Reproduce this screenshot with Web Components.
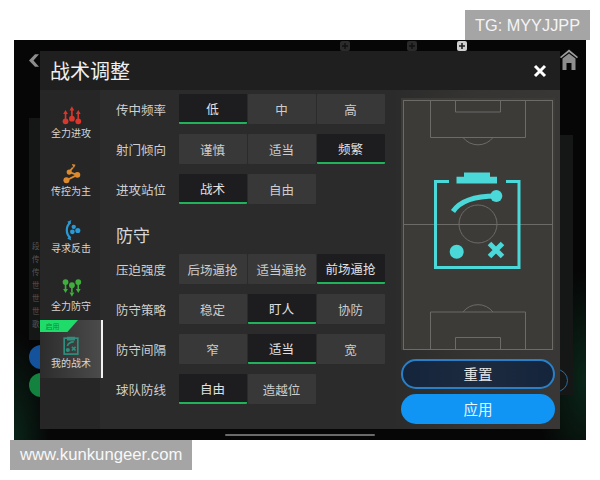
<!DOCTYPE html>
<html lang="zh">
<head>
<meta charset="utf-8">
<style>
html,body{margin:0;padding:0;background:#fff}
body{width:600px;height:480px;overflow:hidden;font-family:"Noto Sans CJK SC","Noto Sans",sans-serif}
</style>
</head>
<body>
<game-page>
  <water-mark slot="top">TG: MYYJJPP</water-mark>
  <tactic-modal title-text="战术调整">
    <side-item slot="side" icon="attack">全力进攻</side-item>
    <side-item slot="side" icon="pass">传控为主</side-item>
    <side-item slot="side" icon="counter">寻求反击</side-item>
    <side-item slot="side" icon="defend">全力防守</side-item>
    <side-item slot="side" icon="mine" active>我的战术</side-item>

    <opt-row slot="form" label="传中频率" options="低,中,高" selected="0"></opt-row>
    <opt-row slot="form" label="射门倾向" options="谨慎,适当,频繁" selected="2"></opt-row>
    <opt-row slot="form" label="进攻站位" options="战术,自由" selected="0"></opt-row>
    <section-title slot="form">防守</section-title>
    <opt-row slot="form" label="压迫强度" options="后场逼抢,适当逼抢,前场逼抢" selected="2"></opt-row>
    <opt-row slot="form" label="防守策略" options="稳定,盯人,协防" selected="1"></opt-row>
    <opt-row slot="form" label="防守间隔" options="窄,适当,宽" selected="1"></opt-row>
    <opt-row slot="form" label="球队防线" options="自由,造越位" selected="0"></opt-row>

    <pitch-board slot="right"></pitch-board>
    <action-btn slot="right" kind="ghost">重置</action-btn>
    <action-btn slot="right" kind="solid">应用</action-btn>
  </tactic-modal>
  <water-mark slot="bottom" kind="url">www.kunkungeer.com</water-mark>
</game-page>

<script>
function shadow(el, html){ el.attachShadow({mode:'open'}).innerHTML = html; }

customElements.define('game-page', class extends HTMLElement{
  constructor(){super();shadow(this,`<style>
    :host{display:flex;flex-direction:column;width:600px;height:480px}
    .top{height:40px;display:flex;justify-content:flex-end;align-items:flex-end;padding-right:10px;box-sizing:border-box}
    .stage{position:relative;height:400px;margin:0 14px;box-sizing:border-box;padding:11px 26px;overflow:hidden;
      background:
        radial-gradient(50px 110px at 100% 85%,#0a2619 0,rgba(10,38,25,0) 100%),
        radial-gradient(36px 110px at 0 100%,#0a2519 0,rgba(10,37,25,0) 100%),
        #060606}
    .bottom{height:40px;display:flex;align-items:flex-start;padding-left:10px}
    .back{position:absolute;left:14px;top:13px}
    .home{position:absolute;left:546px;top:9px}
    .plus{position:absolute;top:1px}
    .leftlist{position:absolute;left:15px;top:78px;width:11px;height:222px;background:#151616;color:#565656;font-size:7.500px;line-height:13px;padding:121px 0 0 3px;box-sizing:border-box;overflow:hidden}
    .c1,.c2{position:absolute;left:15px;width:24px;height:24px;border-radius:50%}
    .c1{top:305px;background:#14539b}
    .c2{top:333px;background:#13823f}
    .ring{position:absolute;left:531px;top:329px;width:21px;height:21px;border:1.500px solid #1f6fb3;border-radius:50%}
    .rside{position:absolute;left:546px;top:95px;width:13px;height:260px;background:#151616}
    .bar{position:absolute;left:211px;top:394px;width:150px;height:2px;background:#6a6a6a;border-radius:1px}
  </style>
  <div class="top"><slot name="top"></slot></div>
  <div class="stage">
    <div class="rside"></div>
    <div class="leftlist">段<br>传<br>传<br>世<br>世<br>世<br>歌</div>
    <div class="c1"></div><div class="c2"></div><div class="ring"></div>
    <svg class="back" width="12" height="15" viewBox="0 0 12 15"><path d="M11 1.200 5.500 7.500l5.500 6.300H7L1 7.500l6-6.300z" fill="#8c8c8c"/></svg>
    <svg class="plus" style="left:326px" width="10" height="10" viewBox="0 0 10 10"><rect width="10" height="10" rx="2" fill="#2b2b2b"/><path d="M5 2v6M2 5h6" stroke="#111" stroke-width="1.400"/></svg>
    <svg class="plus" style="left:393px" width="10" height="10" viewBox="0 0 10 10"><rect width="10" height="10" rx="2" fill="#2b2b2b"/><path d="M5 2v6M2 5h6" stroke="#111" stroke-width="1.400"/></svg>
    <svg class="plus" style="left:443px" width="10" height="10" viewBox="0 0 10 10"><rect width="10" height="10" rx="2" fill="#cfcfcf"/><path d="M5 2v6M2 5h6" stroke="#222" stroke-width="1.600"/></svg>
    <svg class="home" width="18" height="21" viewBox="0 0 18 21"><path d="M9 0.500 18 8l-1 1.300L9 3 1 9.300 0 8z" fill="#9a9a9a"/><path d="M2.500 9.500 9 4.500l6.500 5V21h-4v-7h-5v7h-4z" fill="#8d8d8d"/></svg>
    <div class="bar"></div>
    <slot></slot>
  </div>
  <div class="bottom"><slot name="bottom"></slot></div>`);}
});

customElements.define('water-mark', class extends HTMLElement{
  constructor(){super();shadow(this,`<style>
    :host{display:block;background:#a5a5a5;color:#f4f4f4;font:16.300px/30px "Liberation Sans",sans-serif;padding:0 10px;height:30px;box-sizing:border-box;white-space:nowrap}
    :host([kind=url]){font-size:16.700px;color:#f8f8f8}
  </style><slot></slot>`);}
});

customElements.define('tactic-modal', class extends HTMLElement{
  constructor(){super();shadow(this,`<style>
    :host{display:flex;flex-direction:column;position:relative;width:520px;height:378px;background:#2b2b2b}
    header{height:39px;flex:none;background:#1f1f1f;display:flex;align-items:center;justify-content:space-between;padding:0 13px 0 10px;color:#efefef;font-size:20px}
    .body{flex:1;display:flex;min-height:0}
    .side{width:60px;flex:none;background:#262626;display:flex;flex-direction:column}
    .form{width:292px;flex:none;box-sizing:border-box;padding:4px 0 0 16px;display:flex;flex-direction:column;gap:10px}
    .right{flex:1;background:linear-gradient(90deg,#2b2b2b,#353432 50%,#383735);display:flex;flex-direction:column;align-items:flex-start;padding:8px 0 0 9px;box-sizing:border-box}
  </style>
  <header><span id="t"></span>
    <svg width="14" height="14" viewBox="0 0 14 14"><path d="M2 2l10 10M12 2 2 12" stroke="#fff" stroke-width="3"/></svg>
  </header>
  <div class="body">
    <div class="side"><slot name="side"></slot></div>
    <div class="form"><slot name="form"></slot></div>
    <div class="right"><slot name="right"></slot></div>
  </div>`);
  this.shadowRoot.getElementById('t').textContent=this.getAttribute('title-text');}
});

const ICONS={
attack:`<g fill="#d9372b" stroke="#d9372b"><path d="M5 9v8M12 5v9M19 9v8" stroke-width="1.800" fill="none"/>
  <path d="M5 5.500 2.400 10h5.200zM12 1.500 9.400 6h5.200zM19 5.500 16.400 10h5.200z" stroke="none"/>
  <circle cx="5" cy="18" r="3.200" stroke="none"/><circle cx="12" cy="15" r="3.200" stroke="none"/><circle cx="19" cy="18" r="3.200" stroke="none"/></g>`,
pass:`<g fill="#dd8a2e" stroke="#dd8a2e"><path d="M13 5 9 10l9 3-12 6" stroke-width="2" fill="none"/>
  <path d="M12 1l4 1-2 4z" stroke="none"/><circle cx="9" cy="10" r="2.800" stroke="none"/><circle cx="18" cy="13" r="3.200" stroke="none"/><circle cx="6" cy="19" r="3.300" stroke="none"/></g>`,
counter:`<g fill="#2a9ad6"><path d="M10.500 2.500C5 6.500 5 15 10.500 20" stroke="#2a9ad6" stroke-width="2.400" fill="none"/>
  <path d="M11.500 0l-2 5-2.500-3zM11.500 22.500l-2-5-2.500 3z"/><circle cx="14" cy="7.500" r="2.400"/><circle cx="12.500" cy="13" r="2.600"/><circle cx="18.500" cy="11.500" r="2.800"/></g>`,
defend:`<g fill="#3fae3c" stroke="#3fae3c"><path d="M5 6v7M12 9v7M19 6v7" stroke-width="1.800" fill="none"/>
  <circle cx="5" cy="4.500" r="3.200" stroke="none"/><circle cx="12" cy="8" r="3.200" stroke="none"/><circle cx="19" cy="4.500" r="3.200" stroke="none"/>
  <path d="M5 16.500 2.400 12h5.200zM12 20.500 9.400 16h5.200zM19 16.500 16.400 12h5.200z" stroke="none"/></g>`,
mine:`<g fill="none" stroke="#2f8f7e" stroke-width="1.800"><rect x="3.500" y="3.500" width="15" height="17.500"/>
  <path d="M7.500 2.800h7v2.400h-7z" fill="#2f8f7e"/><path d="M7 12c1-3 4-4.500 7-4.500"/><path d="M12 17l4-4M16 17l-4-4"/><circle cx="7.500" cy="16.500" r="1.400" fill="#2f8f7e"/></g>`
};

customElements.define('side-item', class extends HTMLElement{
  constructor(){super();const a=this.hasAttribute('active');shadow(this,`<style>
    :host{display:flex;flex-direction:column;align-items:center;height:57.500px;width:60px;box-sizing:border-box;padding:15px 0 0 2px;position:relative;color:#d6d6d6;font-size:10px;line-height:14px;white-space:nowrap}
    :host([active]){width:62.500px;padding-right:0.500px;background:linear-gradient(90deg,#2c2c2c,#4b4b4b);border-right:2.500px solid #f2f2f2;height:58px}
    svg{display:block;margin-bottom:1px}
    .tag{position:absolute;left:0;top:0;width:38px;height:12px;background:#1fdc6a;clip-path:polygon(0 0,100% 0,72% 100%,0 100%);color:#12873f;font-size:7px;line-height:12px;padding-left:5.500px;box-sizing:border-box}
  </style>${a?'<div class="tag">启用</div>':''}<svg width="20" height="20" viewBox="0 0 22 22" overflow="visible">${ICONS[this.getAttribute('icon')]}</svg><slot></slot>`);}
});

customElements.define('opt-row', class extends HTMLElement{
  constructor(){super();
    const opts=this.getAttribute('options').split(','),sel=+this.getAttribute('selected');
    shadow(this,`<style>
      :host{display:flex;align-items:center;height:30px;color:#cfcfcf;font-size:12.500px}
      .l{width:62.500px;flex:none}
      .g{display:grid;grid-template-columns:repeat(3,68px);gap:1px}
    </style><div class="l"></div><div class="g"></div>`);
    this.shadowRoot.querySelector('.l').textContent=this.getAttribute('label');
    const g=this.shadowRoot.querySelector('.g');
    opts.forEach((o,i)=>{const b=document.createElement('opt-button');b.textContent=o;if(i===sel)b.setAttribute('on','');g.appendChild(b);});
  }
});

customElements.define('opt-button', class extends HTMLElement{
  constructor(){super();shadow(this,`<style>
    :host{display:flex;align-items:center;justify-content:center;height:30px;box-sizing:border-box;background:#383838;color:#cdcdcd;font-size:12.500px;border-radius:1px;white-space:nowrap}
    :host([on]){background:#1d1d1f;border-bottom:2.500px solid #20b35c;color:#e2e2e2}
  </style><slot></slot>`);}
});

customElements.define('section-title', class extends HTMLElement{
  constructor(){super();shadow(this,`<style>
    :host{display:flex;align-items:flex-end;height:30px;margin:4px 0 -4px;color:#d8d8d8;font-size:17px;line-height:24px;padding-bottom:1px;box-sizing:border-box}
  </style><slot></slot>`);}
});

customElements.define('pitch-board', class extends HTMLElement{
  constructor(){super();shadow(this,`<style>
    :host{display:block;width:154px;height:252px;margin-bottom:9px;flex:none}
    svg{display:block}
  </style>
  <svg width="154" height="252" viewBox="401 98 154 252">
    <rect x="401" y="98" width="154" height="252" fill="#3d3b38"/>
    <g fill="none" stroke="#6d6b68" stroke-width="1">
      <rect x="403.500" y="100.500" width="149" height="249"/>
      <path d="M430.500 100.500v37h95v-37M455.500 100.500v11.500h45v-11.500"/>
      <path d="M463 137.500a19 19 0 0 0 30 0"/>
      <path d="M403.500 224.500h149"/>
      <circle cx="478" cy="224" r="19"/>
      <path d="M430.500 349.500v-37.500h95v37.500M455.500 349.500v-12h45v12"/>
      <path d="M463 312a19 19 0 0 1 30 0"/>
    </g>
    <g fill="#4bd8d8" stroke="none">
      <path d="M464 172.500h26v4.200h7v6.800h-40.500v-6.800h7.500z"/>
      <path d="M449 180h-15v89h86.500v-89h-14.500v3h11.500v83h-80.500v-83h12z"/>
      <circle cx="496.300" cy="196" r="6"/>
      <circle cx="456.700" cy="251.700" r="7"/>
    </g>
    <path d="M453 211.500C460 201 474 196 496 196" fill="none" stroke="#4bd8d8" stroke-width="5"/>
    <path d="M489.500 243.500l13 13M502.500 243.500l-13 13" fill="none" stroke="#4bd8d8" stroke-width="5"/>
  </svg>`);}
});

customElements.define('action-btn', class extends HTMLElement{
  constructor(){super();shadow(this,`<style>
    :host{display:flex;align-items:center;justify-content:center;width:154px;height:30px;box-sizing:border-box;border-radius:15px;font-size:14.500px;flex:none;padding-bottom:2px}
    :host([kind=ghost]){background:linear-gradient(90deg,#14243a,#1d2b40 50%,#14243a);border:2px solid #2a80c8;color:#e6e6e6;margin-bottom:5px}
    :host([kind=solid]){background:#1095f5;color:#e9f5ff}
  </style><slot></slot>`);}
});
</script>
</body>
</html>
